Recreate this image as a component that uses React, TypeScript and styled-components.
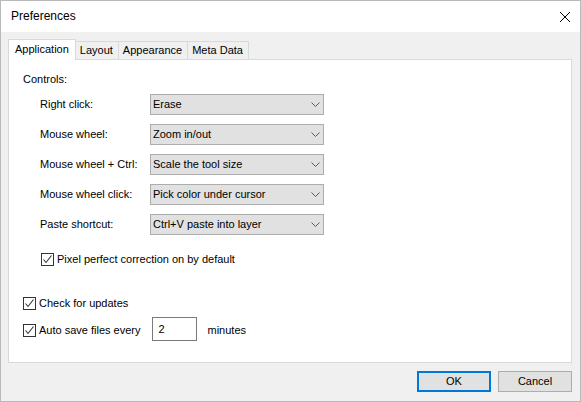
import React from "react";
import styled, { createGlobalStyle } from "styled-components";

const FONT = `"Liberation Sans", Arial, sans-serif`;

const GlobalStyle = createGlobalStyle`
  html, body { margin: 0; padding: 0; background: #ffffff; }
  body { font-family: ${FONT}; font-size: 11px; color: #000; }
  * { box-sizing: border-box; }
`;

const Window = styled.div`
  width: 581px;
  height: 402px;
  border: 1px solid #b9b9b9;
  background: #f0f0f0;
  display: flex;
  flex-direction: column;
`;

const TitleBar = styled.div`
  height: 31px;
  background: #ffffff;
  display: flex;
  align-items: center;
  justify-content: space-between;
  padding: 0 10px 1px 10px;
`;

const Title = styled.span`
  font-size: 12px;
  color: #000;
`;

const CloseButton = styled.div`
  width: 10px;
  height: 10px;
  display: flex;
  margin-top: 2px;
`;

const Body = styled.div`
  flex: 1;
  display: flex;
  flex-direction: column;
  padding: 7px 8px 9px 7px;
`;

const TabStrip = styled.div`
  display: flex;
  align-items: flex-end;
  height: 20px;
  position: relative;
  z-index: 1;
`;

const Tab = styled.div<{ $active?: boolean }>`
  height: ${(p) => (p.$active ? "21px" : "18px")};
  margin-bottom: ${(p) => (p.$active ? "-1px" : "0")};
  margin-left: ${(p) => (p.$active ? "0" : "-1px")};
  padding: ${(p) => (p.$active ? "2px 6px 0 6px" : "1px 5px 0 4px")};
  border: 1px solid #d9d9d9;
  border-bottom: none;
  background: ${(p) => (p.$active ? "#ffffff" : "#f0f0f0")};
  display: flex;
  align-items: flex-start;
  font-size: 11px;
  line-height: 14px;
  &:first-child { margin-left: 0; }
`;

const Panel = styled.div`
  flex: 1;
  background: #ffffff;
  border: 1px solid #d9d9d9;
  padding: 12px 14px 0 14px;
  display: flex;
  flex-direction: column;
`;

const SectionLabel = styled.div`
  line-height: 15px;
  height: 15px;
`;

const ControlsGrid = styled.div`
  display: grid;
  grid-template-columns: 110px 174px;
  row-gap: 9px;
  margin: 7px 0 0 17px;
  align-items: center;
`;

const FieldLabel = styled.div`
  line-height: 15px;
`;

const Combo = styled.div`
  height: 21px;
  background: #e1e1e1;
  border: 1px solid #adadad;
  display: flex;
  align-items: center;
  justify-content: space-between;
  padding: 0 3px 0 2px;
`;

const ComboText = styled.span`
  line-height: 15px;
`;

const CheckRow = styled.div<{ $indent?: number; $top?: number }>`
  display: flex;
  align-items: center;
  margin-left: ${(p) => p.$indent ?? 0}px;
  margin-top: ${(p) => p.$top ?? 0}px;
  height: ${(p) => (p.$indent ? 15 : 24)}px;
`;

const Box = styled.span`
  width: 13px;
  height: 13px;
  border: 1px solid #333333;
  background: #ffffff;
  display: flex;
  align-items: center;
  justify-content: center;
  margin-right: 3px;
  flex-shrink: 0;
`;

const CheckText = styled.span`
  line-height: 15px;
`;

const NumberInput = styled.div`
  width: 45px;
  height: 24px;
  border: 1px solid #7a7a7a;
  background: #ffffff;
  margin-left: 11px;
  padding: 0 0 0 6px;
  display: flex;
  align-items: center;
  line-height: 15px;
  margin-top: -2px;
`;

const Suffix = styled.span`
  margin-left: 11px;
  line-height: 15px;
  margin-top: 1px;
`;

const ButtonRow = styled.div`
  display: flex;
  justify-content: flex-end;
  gap: 7px;
  margin-top: 8px;
`;

const Button = styled.div<{ $default?: boolean }>`
  width: 74px;
  height: 21px;
  background: #e1e1e1;
  border: ${(p) => (p.$default ? "2px solid #0078d7" : "1px solid #adadad")};
  display: flex;
  align-items: center;
  justify-content: center;
  line-height: 15px;
`;

const Chevron = () => (
  <svg width="9" height="5" viewBox="0 0 9 5" style={{ display: "block" }}>
    <path d="M0.5 0.5 L4.5 4.5 L8.5 0.5" fill="none" stroke="#5a5a5a" strokeWidth="1" />
  </svg>
);

const CheckMark = () => (
  <svg width="11" height="11" viewBox="0 0 11 11" style={{ display: "block" }}>
    <path d="M1.5 5.5 L4 8.5 L9.5 1.5" fill="none" stroke="#333333" strokeWidth="1.1" />
  </svg>
);

const CloseIcon = () => (
  <svg width="10" height="10" viewBox="0 0 10 10" style={{ display: "block" }}>
    <path d="M0 0 L10 10 M10 0 L0 10" fill="none" stroke="#000" strokeWidth="1" />
  </svg>
);

const controls: [string, string][] = [
  ["Right click:", "Erase"],
  ["Mouse wheel:", "Zoom in/out"],
  ["Mouse wheel + Ctrl:", "Scale the tool size"],
  ["Mouse wheel click:", "Pick color under cursor"],
  ["Paste shortcut:", "Ctrl+V paste into layer"],
];

const tabs = ["Application", "Layout", "Appearance", "Meta Data"];

export default function App() {
  return (
    <>
      <GlobalStyle />
      <Window>
        <TitleBar>
          <Title>Preferences</Title>
          <CloseButton>
            <CloseIcon />
          </CloseButton>
        </TitleBar>
        <Body>
          <TabStrip>
            {tabs.map((t, i) => (
              <Tab key={t} $active={i === 0}>
                {t}
              </Tab>
            ))}
          </TabStrip>
          <Panel>
            <SectionLabel>Controls:</SectionLabel>
            <ControlsGrid>
              {controls.map(([label, value]) => (
                <React.Fragment key={label}>
                  <FieldLabel>{label}</FieldLabel>
                  <Combo>
                    <ComboText>{value}</ComboText>
                    <Chevron />
                  </Combo>
                </React.Fragment>
              ))}
            </ControlsGrid>
            <CheckRow $indent={18} $top={17}>
              <Box>
                <CheckMark />
              </Box>
              <CheckText>Pixel perfect correction on by default</CheckText>
            </CheckRow>
            <CheckRow $top={24}>
              <Box>
                <CheckMark />
              </Box>
              <CheckText>Check for updates</CheckText>
            </CheckRow>
            <CheckRow $top={3}>
              <Box>
                <CheckMark />
              </Box>
              <CheckText>Auto save files every</CheckText>
              <NumberInput>2</NumberInput>
              <Suffix>minutes</Suffix>
            </CheckRow>
          </Panel>
          <ButtonRow>
            <Button $default>OK</Button>
            <Button>Cancel</Button>
          </ButtonRow>
        </Body>
      </Window>
    </>
  );
}
